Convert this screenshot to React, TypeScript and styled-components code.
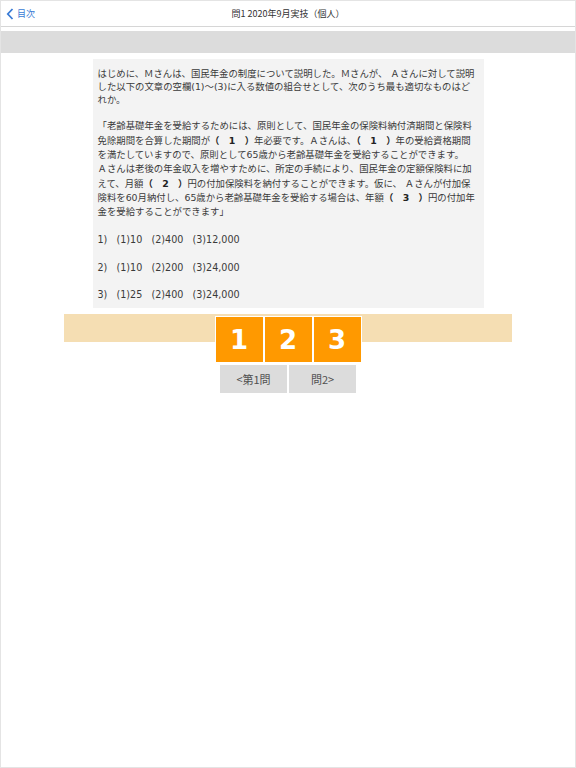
import styled, { createGlobalStyle } from "styled-components";

const GlobalStyle = createGlobalStyle`
    html, body {
        margin: 0;
        padding: 0;
        background: #ffffff;
    }
    body {
        font-family: "Noto Sans CJK JP", "Noto Sans", sans-serif;
        color: #333333;
    }
`;

const Frame = styled.div`
    box-sizing: border-box;
    width: 576px;
    height: 768px;
    border: 1px solid #e4e4e4;
    background: #ffffff;
    display: flex;
    flex-direction: column;
`;

const Header = styled.header`
    position: relative;
    height: 25px;
    border-bottom: 1px solid #d6d6d6;
    display: flex;
    align-items: center;
    justify-content: center;
`;

const BackLink = styled.a`
    position: absolute;
    left: 5px;
    top: 0;
    bottom: 0;
    display: flex;
    align-items: center;
    gap: 3px;
    color: #3a7bd5;
    font-size: 9px;
    text-decoration: none;
`;

const Title = styled.h1`
    margin: 0;
    font-size: 9px;
    font-weight: normal;
    color: #333333;
`;

const GreyBand = styled.div`
    height: 22px;
    margin-top: 4px;
    background: #dcdcdc;
`;

const Main = styled.main`
    display: flex;
    flex-direction: column;
    align-items: center;
    padding-top: 6px;
`;

const QuestionBox = styled.section`
    box-sizing: border-box;
    width: 391px;
    padding: 8px 3px 6px 5px;
    background: #f3f3f3;
    font-family: "DejaVu Sans", "Noto Sans CJK JP", sans-serif;
    font-size: 9.4px;
    color: #3a3a3a;
    white-space: nowrap;
`;

const Paragraph = styled.p<{ $lh: number; $gap: number }>`
    margin: 0 0 ${p => p.$gap}px 0;
    line-height: ${p => p.$lh}px;
`;

const Blank = styled.b`
    font-weight: bold;
    color: #222222;
`;

const Choice = styled.p`
    margin: 0 0 13.5px 0;
    line-height: 14px;
    font-size: 9.6px;
    white-space: pre;

    &:last-child {
        margin-bottom: 0;
    }
`;

const Strip = styled.div`
    box-sizing: border-box;
    width: 448px;
    height: 28px;
    margin-top: 6px;
    padding-top: 2px;
    background: #f5deb3;
    display: flex;
    justify-content: center;
`;

const NumberButton = styled.button`
    box-sizing: border-box;
    width: 49px;
    height: 47px;
    flex: none;
    border: 1px solid #ffffff;
    background: #ff9900;
    color: #ffffff;
    font-family: "DejaVu Sans", Verdana, sans-serif;
    font-size: 26px;
    font-weight: bold;
    padding: 0;
`;

const NavRow = styled.div`
    display: flex;
    margin-top: 22px;
`;

const NavButton = styled.button`
    box-sizing: border-box;
    width: 69px;
    height: 30px;
    border: 1px solid #ffffff;
    background: #dcdcdc;
    color: #505050;
    font-family: "Noto Sans CJK JP", sans-serif;
    font-size: 11px;
    padding: 0;
`;

function Chevron() {
    return (
        <svg width="8" height="12" viewBox="0 0 8 12">
            <path d="M6.5 1 L1.8 6 L6.5 11" fill="none" stroke="#3a7bd5" strokeWidth="1.8" />
        </svg>
    );
}

const choices = [
    "1)   (1)10   (2)400   (3)12,000",
    "2)   (1)10   (2)200   (3)24,000",
    "3)   (1)25   (2)400   (3)24,000",
];

function App() {
    return (
        <>
            <GlobalStyle />
            <Frame>
                <Header>
                    <BackLink href="#">
                        <Chevron />
                        目次
                    </BackLink>
                    <Title>問1 2020年9月実技（個人）</Title>
                </Header>
                <GreyBand />
                <Main>
                    <QuestionBox>
                        <Paragraph $lh={13} $gap={13.4}>
                            はじめに、Ｍさんは、国民年金の制度について説明した。Ｍさんが、 Ａさんに対して説明
                            <br />
                            した以下の文章の空欄(1)～(3)に入る数値の組合せとして、次のうち最も適切なものはど
                            <br />
                            れか。
                        </Paragraph>
                        <Paragraph $lh={14.3} $gap={14}>
                            「老齢基礎年金を受給するためには、原則として、国民年金の保険料納付済期間と保険料
                            <br />
                            免除期間を合算した期間が<Blank>（　1　）</Blank>年必要です。Ａさんは、
                            <Blank>（　1　）</Blank>年の受給資格期間
                            <br />
                            を満たしていますので、原則として65歳から老齢基礎年金を受給することができます。
                            <br />
                            Ａさんは老後の年金収入を増やすために、所定の手続により、国民年金の定額保険料に加
                            <br />
                            えて、月額<Blank>（　2　）</Blank>円の付加保険料を納付することができます。仮に、 Ａさんが付加保
                            <br />
                            険料を60月納付し、65歳から老齢基礎年金を受給する場合は、年額<Blank>（　3　）</Blank>円の付加年
                            <br />
                            金を受給することができます」
                        </Paragraph>
                        {choices.map(c => (
                            <Choice key={c}>{c}</Choice>
                        ))}
                    </QuestionBox>
                    <Strip>
                        <NumberButton>1</NumberButton>
                        <NumberButton>2</NumberButton>
                        <NumberButton>3</NumberButton>
                    </Strip>
                    <NavRow>
                        <NavButton>&lt;第1問</NavButton>
                        <NavButton>問2&gt;</NavButton>
                    </NavRow>
                </Main>
            </Frame>
        </>
    );
}

export default App;
